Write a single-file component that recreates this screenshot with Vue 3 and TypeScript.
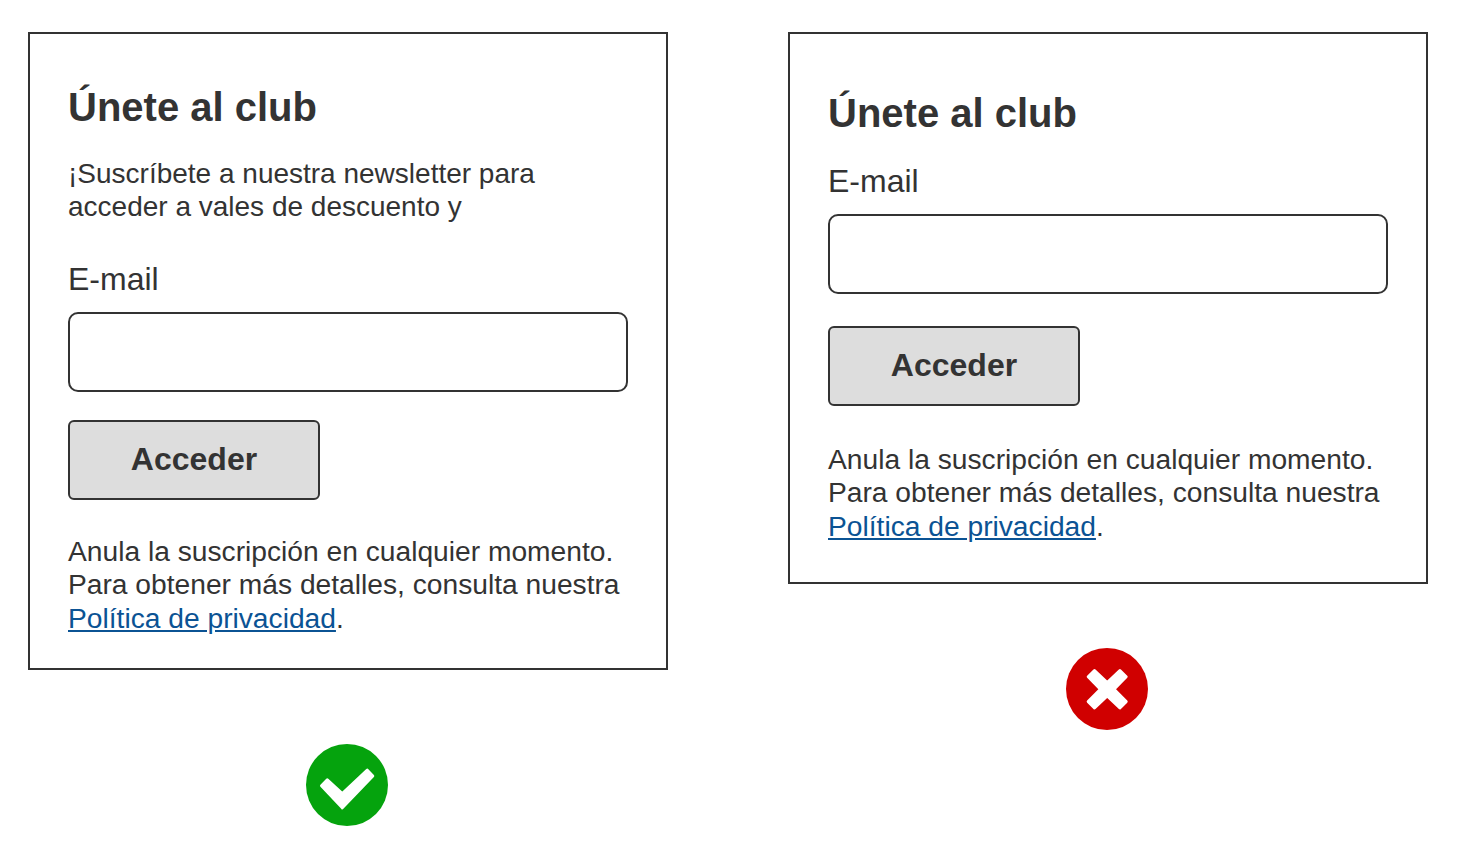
<script setup lang="ts">
const terms = ['Anula la suscripción en cualquier momento.', 'Para obtener más detalles, consulta nuestra']
</script>

<template>
  <div class="page">
    <section class="example good">
      <div class="card">
        <h2>Únete al club</h2>
        <p class="intro">¡Suscríbete a nuestra newsletter para<br />acceder a vales de descuento y</p>
        <label class="label">E-mail</label>
        <div class="input"></div>
        <div class="button">Acceder</div>
        <p class="terms">
          <template v-for="line in terms" :key="line">{{ line }}<br /></template>
          <a href="#">Política de privacidad</a>.
        </p>
      </div>
      <svg class="status" viewBox="0 0 82 82" width="82" height="82">
        <circle cx="41" cy="41" r="41" fill="#05a30d" />
        <path d="M15.5 41.7 L21.3 35.9 L36.3 49.5 L61.3 26.2 L66.8 32 L36.3 63.8 Z" fill="#fff" stroke="#fff" stroke-width="3" stroke-linejoin="round" />
      </svg>
    </section>

    <section class="example bad">
      <div class="card">
        <h2>Únete al club</h2>
        <label class="label">E-mail</label>
        <div class="input"></div>
        <div class="button">Acceder</div>
        <p class="terms">
          <template v-for="line in terms" :key="line">{{ line }}<br /></template>
          <a href="#">Política de privacidad</a>.
        </p>
      </div>
      <svg class="status" viewBox="0 0 82 82" width="82" height="82">
        <circle cx="41" cy="41" r="41" fill="#d00000" />
        <path d="M28.5 22.5 L41.2 34.5 L53.9 22.5 L60.2 28.8 L48 41.2 L60.2 53.6 L53.9 59.9 L41.2 48 L28.5 59.9 L22.2 53.6 L34.4 41.2 L22.2 28.8 Z" fill="#fff" stroke="#fff" stroke-width="3" stroke-linejoin="round" />
      </svg>
    </section>
  </div>
</template>

<style>
body {
  background: #fff;
}
</style>

<style scoped>
.page {
  display: flex;
  gap: 120px;
  align-items: flex-start;
  padding: 32px 28px;
  font-family: "Liberation Sans", Arial, sans-serif;
  color: #333;
}

.example {
  display: flex;
  flex-direction: column;
  align-items: center;
}

.card {
  box-sizing: border-box;
  width: 640px;
  height: 552px;
  border: 2px solid #333;
  padding: 38px;
}

.good .card {
  height: 638px;
}

.status {
  display: block;
  margin-right: 2px;
}

.good .status {
  margin-top: 74px;
}

.bad .status {
  margin-top: 64px;
}

h2 {
  margin: 0;
  font-size: 40px;
  line-height: 70px;
  font-weight: 700;
}

.bad h2 {
  margin-top: 6px;
}

.intro {
  margin: 15px 0 0;
  font-size: 28px;
  line-height: 33px;
}

.label {
  display: block;
  margin-top: 39px;
  font-size: 32px;
  line-height: 34px;
}

.bad .label {
  margin-top: 16px;
}

.input {
  box-sizing: border-box;
  height: 80px;
  margin-top: 16px;
  border: 2px solid #333;
  border-radius: 10px;
}

.button {
  box-sizing: border-box;
  width: 252px;
  height: 80px;
  margin-top: 28px;
  border: 2px solid #333;
  border-radius: 6px;
  background: #ddd;
  font-size: 32px;
  font-weight: 700;
  line-height: 74px;
  text-align: center;
}

.bad .button {
  margin-top: 32px;
}

.terms {
  margin: 35px 0 0;
  font-size: 28.2px;
  line-height: 33.4px;
}

.bad .terms {
  margin-top: 37px;
}

.terms a {
  color: #0b5394;
  text-decoration: underline;
}
</style>
